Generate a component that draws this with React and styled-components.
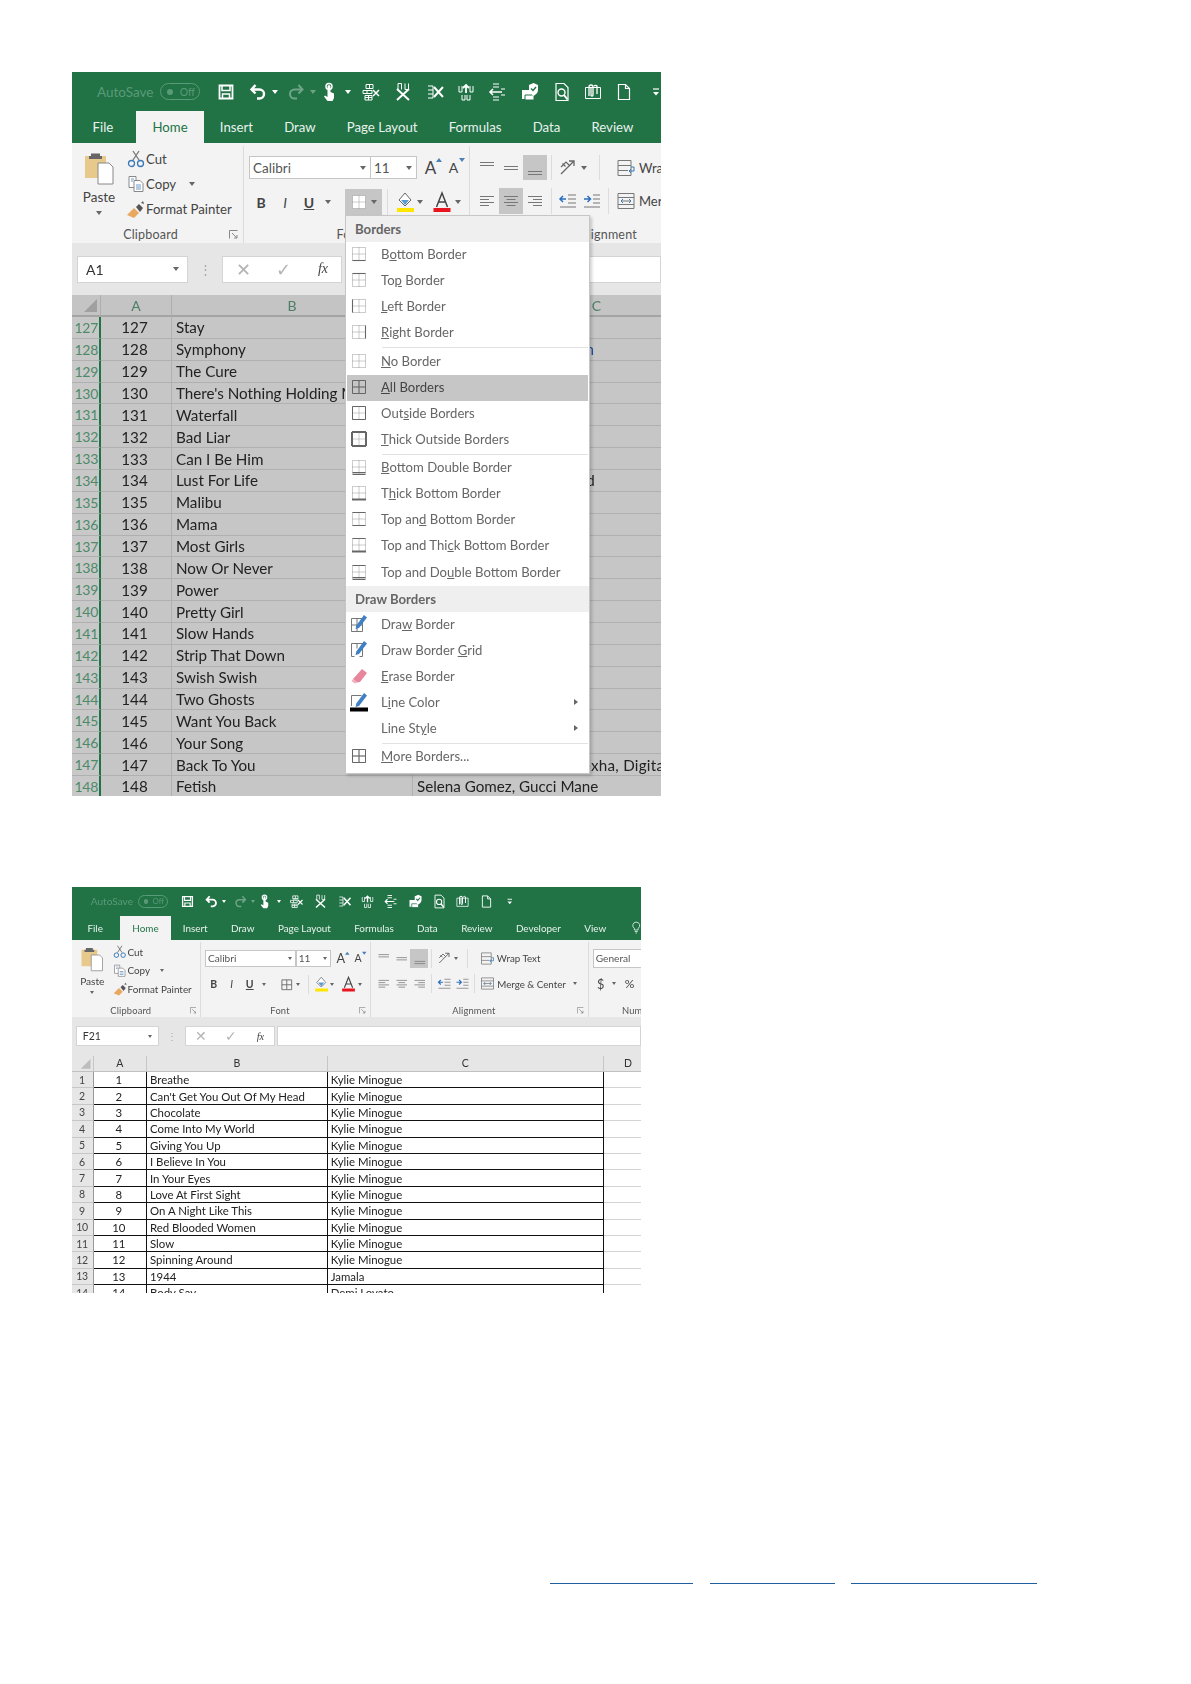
import React from 'react';
import styled, { createGlobalStyle } from 'styled-components';

const GlobalStyle = createGlobalStyle`
  html, body { margin: 0; padding: 0; background: #fff; }
  body { font-family: Lato, "Open Sans", sans-serif; }
`;

const Page = styled.div`
  width: 1191px;
  height: 1684px;
  box-sizing: border-box;
  padding: 72px 0 0 72px;
  overflow: hidden;
`;

const Window = styled.div`
  position: relative;
  width: ${(p) => p.$w}px;
  height: ${(p) => p.$h}px;
  zoom: ${(p) => p.$zoom};
  margin-top: ${(p) => p.$top}px;
  overflow: hidden;
  filter: blur(0.35px);
`;

const TitleBar = styled.div`
  display: flex;
  align-items: center;
  height: 39px;
  width: 800px;
  background: #217346;
  padding-left: 25px;
  box-sizing: border-box;
`;

const AutoSave = styled.span`
  width: 60px;
  font-size: 13.5px;
  color: #5a9a78;
`;

const Toggle = styled.span`
  display: flex;
  align-items: center;
  justify-content: space-between;
  box-sizing: border-box;
  width: 40px;
  height: 17px;
  margin-left: 3px;
  padding: 0 4px 0 6px;
  border: 1px solid #5a9a78;
  border-radius: 9px;
  font-size: 10.5px;
  color: #5a9a78;
  &::before {
    content: '';
    width: 6px;
    height: 6px;
    border-radius: 50%;
    background: #5a9a78;
  }
`;

const Slot = styled.span`
  display: flex;
  align-items: center;
  justify-content: center;
  flex: none;
  width: ${(p) => p.$w}px;
  margin-left: ${(p) => p.$ml || 0}px;
  opacity: ${(p) => (p.$faded ? 0.35 : 1)};
`;

const TabRow = styled.div`
  display: flex;
  align-items: stretch;
  height: 32px;
  width: 800px;
  background: #217346;
  padding-left: 5px;
`;

const Tab = styled.div`
  display: flex;
  align-items: center;
  padding: 0 ${(p) => (p.$active ? 16.6 : 15.6)}px;
  margin-right: ${(p) => p.$mr || 0}px;
  font-size: 13.2px;
  color: ${(p) => (p.$active ? '#217346' : '#e8f2ec')};
  background: ${(p) => (p.$active ? '#f3f3f3' : 'transparent')};
`;

const Ribbon = styled.div`
  display: flex;
  height: ${(p) => p.$h}px;
  width: 860px;
  background: #f3f3f3;
  color: #444;
`;

const Group = styled.div`
  display: flex;
  flex-direction: column;
  flex: none;
  box-sizing: border-box;
  width: ${(p) => p.$w}px;
  padding-left: ${(p) => p.$pl || 0}px;
  border-right: 1px solid #dcdcdc;
  margin: 3px 0 0;
`;

const GroupBody = styled.div`
  flex: 1;
  display: flex;
  flex-direction: ${(p) => (p.$column ? 'column' : 'row')};
  padding-top: ${(p) => p.$pt || 0}px;
  gap: ${(p) => p.$gap || 0}px;
`;

const GroupLabel = styled.div`
  display: grid;
  grid-template-columns: 1fr 14px;
  align-items: center;
  height: 17px;
  margin-left: ${(p) => (p.$pl ? -p.$pl : 0)}px;
  font-size: 12.5px;
  letter-spacing: 0.2px;
  color: #555;
  text-align: center;
`;

const PasteColumn = styled.div`
  display: flex;
  flex-direction: column;
  align-items: center;
  width: 54px;
  padding-top: 5px;
  font-size: 13.5px;
  line-height: 16px;
`;

const ClipStack = styled.div`
  display: flex;
  flex-direction: column;
`;

const ClipRow = styled.div`
  display: flex;
  align-items: center;
  height: 25px;
  font-size: 13.2px;
  white-space: nowrap;
`;

const ClipIcon = styled.span`
  display: flex;
  justify-content: center;
  width: 20px;
`;

const ToolRow = styled.div`
  display: flex;
  align-items: center;
  height: ${(p) => p.$h}px;
`;

const Box = styled.div`
  display: flex;
  align-items: center;
  justify-content: space-between;
  box-sizing: border-box;
  width: ${(p) => p.$w}px;
  height: 100%;
  padding: 0 4px 0 3px;
  margin-left: ${(p) => p.$ml || 0}px;
  background: #fff;
  border: 1px solid #c6c6c6;
  font-size: 13.5px;
  color: #555;
`;

const Tool = styled.span`
  display: flex;
  align-items: center;
  justify-content: center;
  flex: none;
  box-sizing: border-box;
  height: 100%;
  width: ${(p) => p.$w || 24}px;
  margin-left: ${(p) => p.$ml || 0}px;
  background: ${(p) => (p.$on ? '#c6c6c6' : 'transparent')};
  font-size: ${(p) => p.$fs || 14}px;
  font-weight: ${(p) => (p.$bold ? 700 : 400)};
  font-style: ${(p) => (p.$italic ? 'italic' : 'normal')};
  text-decoration: ${(p) => (p.$under ? 'underline' : 'none')};
  color: #444;
`;

const ToolSep = styled.span`
  flex: none;
  width: 1px;
  height: 100%;
  background: #dcdcdc;
  margin: 0 ${(p) => p.$mx || 4}px;
`;

const WrapLabel = styled.span`
  font-size: 13px;
  margin-left: 3px;
  white-space: nowrap;
`;

const Caret = styled.i`
  display: inline-block;
  flex: none;
  width: 0;
  height: 0;
  margin-left: ${(p) => p.$ml || 0}px;
  border-left: 3px solid transparent;
  border-right: 3px solid transparent;
  border-top: 4px solid ${(p) => p.$color || '#666'};
`;

const FormulaBar = styled.div`
  display: flex;
  align-items: center;
  height: 52px;
  background: #e6e6e6;
  padding-left: 5px;
`;

const NameBox = styled.div`
  display: flex;
  align-items: center;
  justify-content: space-between;
  box-sizing: border-box;
  flex: none;
  width: 111px;
  height: 27px;
  padding: 0 8px;
  background: #fff;
  border: 1px solid #d4d4d4;
  font-size: 14px;
  color: #333;
`;

const GripDots = styled.span`
  flex: none;
  width: 34px;
  text-align: center;
  font-size: 13px;
  color: #aaa;
`;

const FxBox = styled.div`
  display: grid;
  grid-template-columns: 40px 40px 40px;
  align-items: center;
  justify-items: center;
  box-sizing: border-box;
  flex: none;
  width: 120px;
  height: 27px;
  background: #fff;
  border: 1px solid #d4d4d4;
  font-size: 18px;
  color: #b4b4b4;
`;

const FxMark = styled.span`
  font-family: "Liberation Serif", serif;
  font-style: italic;
  font-size: 14px;
  color: #444;
`;

const FormulaInput = styled.div`
  flex: 1;
  height: 27px;
  margin-left: 3px;
  background: #fff;
  border: 1px solid #d4d4d4;
  box-sizing: border-box;
`;

const SheetRow = styled.div`
  display: grid;
  grid-template-columns: 29px 71px 241px 368px 66px;
  width: 775px;
  height: ${(p) => p.$h || 21.87}px;
  box-sizing: border-box;
  background: ${(p) => (p.$dim ? '#c6c6c6' : '#fff')};
  font-size: 15.2px;
  color: #222;
`;

const HeadCell = styled.div`
  display: flex;
  align-items: center;
  justify-content: center;
  box-sizing: border-box;
  background: ${(p) => (p.$dim ? '#c4c4c4' : '#e6e6e6')};
  border-right: 1px solid ${(p) => (p.$dim ? '#aeaeae' : '#c6c6c6')};
  border-bottom: 2px solid ${(p) => (p.$dim ? '#a4a4a4' : '#c0c0c0')};
  font-size: 14px;
  color: ${(p) => (p.$dim ? '#4d7f66' : '#333')};
`;

const Corner = styled(HeadCell)`
  align-items: flex-end;
  justify-content: flex-end;
  padding: 0 3px 3px 0;
  &::after {
    content: '';
    width: 13px;
    height: 13px;
    background: ${(p) => (p.$dim ? '#a0a0a0' : '#bdbdbd')};
    clip-path: polygon(100% 0, 100% 100%, 0 100%);
  }
`;

const RowHead = styled.div`
  display: flex;
  align-items: center;
  justify-content: ${(p) => (p.$dim ? 'flex-end' : 'center')};
  box-sizing: border-box;
  padding-right: 1px;
  background: ${(p) => (p.$dim ? '#c8c8c8' : '#e6e6e6')};
  border-right: ${(p) => (p.$dim ? '2px solid #217346' : '1px solid #9a9a9a')};
  border-bottom: 1px solid ${(p) => (p.$dim ? '#b0b0b0' : '#c6c6c6')};
  font-size: 14px;
  letter-spacing: -0.3px;
  color: ${(p) => (p.$dim ? '#4d8a6a' : '#444')};
`;

const Cell = styled.div`
  display: flex;
  align-items: center;
  justify-content: ${(p) => (p.$center ? 'center' : 'flex-start')};
  box-sizing: border-box;
  padding: 0 ${(p) => (p.$center ? 3 : 0)}px 0 ${(p) => (p.$center ? 0 : 4)}px;
  white-space: nowrap;
  min-width: 0;
  overflow: hidden;
  letter-spacing: ${(p) => p.$spacing || 0}px;
  color: ${(p) => p.$color || '#222'};
  border-right: 1px solid ${(p) => (p.$dim ? '#b0b0b0' : p.$free ? 'transparent' : '#111')};
  border-bottom: 1px solid ${(p) => (p.$dim ? '#b0b0b0' : p.$free ? '#d4d4d4' : '#111')};
`;

const Menu = styled.div`
  position: absolute;
  left: 273px;
  top: 143px;
  width: 245px;
  box-sizing: border-box;
  padding-bottom: 3px;
  background: #fff;
  border: 1px solid #c6c6c6;
  box-shadow: 2px 2px 3px rgba(0, 0, 0, 0.18);
`;

const MenuHead = styled.div`
  display: flex;
  align-items: center;
  height: 26px;
  padding-left: 9px;
  background: #efefef;
  font-size: 13.2px;
  font-weight: 700;
  color: #666;
`;

const MenuItem = styled.div`
  display: flex;
  align-items: center;
  box-sizing: border-box;
  height: 26.1px;
  padding-bottom: 2px;
  margin: 0 1px;
  background: ${(p) => (p.$on ? '#c6c6c6' : 'transparent')};
  font-size: 13.1px;
  color: ${(p) => (p.$on ? '#444' : '#666')};
  white-space: nowrap;
`;

const MenuIcon = styled.span`
  display: flex;
  justify-content: center;
  flex: none;
  width: 24px;
  margin-right: 10px;
`;

const Arrow = styled.i`
  width: 0;
  height: 0;
  margin: 0 10px 0 auto;
  border-top: 3.5px solid transparent;
  border-bottom: 3.5px solid transparent;
  border-left: 4px solid #666;
`;

const MenuSep = styled.div`
  margin: 0.6px 1px 0.6px 36px;
  height: 1px;
  background: #e2e2e2;
`;

const Footer = styled.div`
  display: flex;
  margin-top: 290px;
  padding-left: 478px;
`;

const FooterLink = styled.a`
  display: block;
  width: ${(p) => p.$w}px;
  margin-right: ${(p) => p.$mr || 0}px;
  border-bottom: 1px solid #1f5fa0;
`;

const Svg = ({ w = 20, h = 20, children }) => (
  <svg width={w} height={h} viewBox={`0 0 ${w} ${h}`} fill="none">
    {children}
  </svg>
);

const W = { stroke: '#fff', strokeWidth: 1.5 };

const qat = {
  save: (
    <Svg>
      <path d="M3.5 3.5h13v13h-13z" {...W} strokeWidth="1.8" />
      <path d="M6 3.5v5h8v-5M6.5 16.5v-4.5h7v4.5" {...W} />
    </Svg>
  ),
  undo: (
    <Svg>
      <path d="M7.5 3 3.5 7.5l4 4M3.5 7.5h8a4.5 4.5 0 0 1 0 9H9" {...W} strokeWidth="2.4" />
    </Svg>
  ),
  redo: (
    <Svg>
      <path d="M12.5 3l4 4.5-4 4M16.5 7.5h-8a4.5 4.5 0 0 0 0 9H11" {...W} strokeWidth="2" />
    </Svg>
  ),
  touch: (
    <Svg>
      <circle cx="10" cy="4.500" r="3" stroke="#fff" strokeWidth="1.500" />
      <path d="M8.500 4.500a1.500 1.500 0 0 1 3 0v5.500l3.500 1.500V16l-1.500 3h-5L5 14.500l1-1 2.500 1.500z" fill="#fff" />
    </Svg>
  ),
  delCells: (
    <Svg>
      <path d="M5 2.500h7v4H5zM5 6.500h7M8.500 2.500v4M2 8.500h9v3H2zM6 8.500v3M4 13.500h7v4.500H4zM4 15.500h7M7.500 13.500v4.500" stroke="#fff" strokeWidth="1" />
      <path d="m12 8 6 6m0-6-6 6" {...W} />
    </Svg>
  ),
  delCols: (
    <Svg>
      <path d="M5 1.500v6M8.500 1.500v6M12 1.500v6M15.500 1.500v6M5 1.500h3.500M12 7.500h3.500" stroke="#fff" strokeWidth="1" />
      <path d="m4 7 12 11M16 7 4 18" stroke="#fff" strokeWidth="2" />
    </Svg>
  ),
  delRows: (
    <Svg>
      <path d="M3 4h5v12H3M3 8h5M3 12h5" stroke="#fff" strokeWidth="1" />
      <path d="m9 5 9 10m0-10-9 10" stroke="#fff" strokeWidth="2" />
    </Svg>
  ),
  insCols: (
    <Svg>
      <path d="M3 4v6h3V4M14 4v6h3V4M6 13v5h3v-5M11 13v5h3v-5" stroke="#fff" strokeWidth="1" />
      <path d="M10 11V3M7 6l3-3 3 3" {...W} strokeWidth="1.8" />
    </Svg>
  ),
  insRows: (
    <Svg>
      <path d="M6 2h6M6 5h6M6 15h6M6 18h6M14 7h4M14 13h4" stroke="#fff" strokeWidth="1.2" />
      <path d="M15 10H3M6 7l-3 3 3 3" {...W} strokeWidth="1.6" />
    </Svg>
  ),
  secure: (
    <Svg>
      <path d="M2 8h9v9H2z" fill="#fff" />
      <path d="M5 18h9v-5H5z" fill="#fff" stroke="#217346" />
      <path d="M10 2.500 13.500 1 18 3v5c0 3-2 4.500-4.500 6C11 12.500 9 11 9 8V3z" fill="#fff" />
      <path d="m11 6.500 2 2 3-3.500" stroke="#217346" strokeWidth="1.4" />
    </Svg>
  ),
  preview: (
    <Svg>
      <path d="M4 1.500h8l4 4v13H4z" {...W} strokeWidth="1.2" />
      <circle cx="9.500" cy="10.500" r="3.500" stroke="#fff" strokeWidth="1.4" />
      <path d="m12 13 3.500 4.500" stroke="#fff" strokeWidth="2" />
    </Svg>
  ),
  clip: (
    <Svg>
      <path d="M2.500 5.500h15v11h-15z" stroke="#fff" strokeWidth="1" />
      <path d="M6 14V5a2 2 0 0 1 4 0v8a1 1 0 0 1-2 0V6M11 4h0a2 2 0 0 1 3 0v8" stroke="#fff" strokeWidth="1.300" />
    </Svg>
  ),
  doc: (
    <Svg>
      <path d="M4.500 2.500h7l4 4v11h-11zM11.500 2.500v4h4" {...W} strokeWidth="1.2" />
    </Svg>
  ),
  more: (
    <Svg w={10} h={20}>
      <path d="M2 7h6" stroke="#fff" strokeWidth="1.2" />
      <path d="m2 10 3 3.500L8 10z" fill="#fff" />
    </Svg>
  ),
};

const quick = [
  { k: 'save', w: 32, ml: 10 },
  { k: 'undo', w: 28, ml: 2 },
  { c: 1, w: 6 },
  { k: 'redo', w: 28, ml: 4, faded: 1 },
  { c: 1, w: 6, faded: 1 },
  { k: 'touch', w: 24, ml: 1 },
  { c: 1, w: 6, ml: 4 },
  { k: 'delCells', w: 32, ml: 4 },
  { k: 'delCols', w: 32 },
  { k: 'delRows', w: 32 },
  { k: 'insCols', w: 30 },
  { k: 'insRows', w: 32 },
  { k: 'secure', w: 34 },
  { k: 'preview', w: 30 },
  { k: 'clip', w: 32 },
  { k: 'doc', w: 30 },
  { k: 'more', w: 34 },
];

const borderLines = {
  bottom: [[2.5, 15.5, 15.5, 15.5, 1.1]],
  top: [[2.5, 2.5, 15.5, 2.5, 1.1]],
  left: [[2.5, 2.5, 2.5, 15.5, 1.1]],
  right: [[15.5, 2.5, 15.5, 15.5, 1.1]],
  none: [],
  outside: [[2.5, 2.5, 15.5, 2.5, 1], [2.5, 15.5, 15.5, 15.5, 1], [2.5, 2.5, 2.5, 15.5, 1], [15.5, 2.5, 15.5, 15.5, 1]],
  thick: [[2, 2, 16, 2, 2], [2, 16, 16, 16, 2], [2, 2, 2, 16, 2], [16, 2, 16, 16, 2]],
  double: [[2.5, 14.5, 15.5, 14.5, 1], [2.5, 16.5, 15.5, 16.5, 1]],
  thickBottom: [[2, 15.5, 16, 15.5, 2]],
  topBottom: [[2.5, 2.5, 15.5, 2.5, 1], [2.5, 15.5, 15.5, 15.5, 1]],
  topThick: [[2.5, 2.5, 15.5, 2.5, 1], [2, 15.5, 16, 15.5, 2]],
  topDouble: [[2.5, 2.5, 15.5, 2.5, 1], [2.5, 14.5, 15.5, 14.5, 1], [2.5, 16.5, 15.5, 16.5, 1]],
  all: [[2.5, 2.5, 15.5, 2.5, 1], [2.5, 15.5, 15.5, 15.5, 1], [2.5, 2.5, 2.5, 15.5, 1], [15.5, 2.5, 15.5, 15.5, 1], [9, 2.5, 9, 15.5, 1], [2.5, 9, 15.5, 9, 1]],
};

const BorderIcon = ({ kind, color = '#666', fill = 'none' }) => (
  <Svg w={18} h={18}>
    <path d="M2.500 2.500h13v13h-13zM9 2.500v13M2.500 9h13" fill={fill} stroke="#999" strokeWidth="1" strokeDasharray="1 1" />
    {borderLines[kind].map(([x1, y1, x2, y2, sw], i) => (
      <line key={i} x1={x1} y1={y1} x2={x2} y2={y2} stroke={color} strokeWidth={sw} />
    ))}
  </Svg>
);

const Lines = ({ rows, color = '#777' }) => (
  <Svg w={18} h={18}>
    {rows.map(([x1, x2, y], i) => (
      <line key={i} x1={x1} x2={x2} y1={y} y2={y} stroke={color} strokeWidth="1" />
    ))}
  </Svg>
);

const vTop = [[2, 16, 3.5], [2, 16, 6.5]];
const vMid = [[2, 16, 7.5], [2, 16, 10.5]];
const vBot = [[2, 16, 12.5], [2, 16, 15.5]];
const aLeft = [[2, 16, 4.5], [2, 11, 7.5], [2, 16, 10.5], [2, 11, 13.5]];
const aMid = [[2, 16, 4.5], [4.5, 13.5, 7.5], [2, 16, 10.5], [4.5, 13.5, 13.5]];
const aRight = [[2, 16, 4.5], [7, 16, 7.5], [2, 16, 10.5], [7, 16, 13.5]];

const PasteIcon = () => (
  <Svg w={32} h={34}>
    <path d="M2 5h21v22H2z" fill="#e8c98c" />
    <path d="M8 5V2.500h9V5h2v3H6V5z" fill="#666" />
    <path d="M15 12h11l4 4v17H15z" fill="#fff" stroke="#888" />
  </Svg>
);

const CutIcon = () => (
  <Svg w={18} h={18}>
    <path d="m6 10 6-9M12 10 6 1" stroke="#777" strokeWidth="1.3" />
    <circle cx="4.500" cy="13.500" r="3" stroke="#3a78b8" strokeWidth="1.300" />
    <circle cx="13.500" cy="13.500" r="3" stroke="#3a78b8" strokeWidth="1.300" />
  </Svg>
);

const CopyIcon = () => (
  <Svg w={18} h={18}>
    <path d="M2 1.500h7v11H2z" fill="#fff" stroke="#888" />
    <path d="M7 5.500h6l3 3v8H7z" fill="#fff" stroke="#888" />
    <path d="M9 10h5M9 12h5M9 14h5M4 4h3M4 6h2" stroke="#6a9ac8" strokeWidth="1" />
  </Svg>
);

const PainterIcon = () => (
  <Svg w={20} h={18}>
    <path d="m8 8 5 5-5 5-7-3z" fill="#e8a860" />
    <path d="m10 7 3-3 4 4-3 4z" fill="#555" />
    <path d="m15 3 2-2 1 3z" fill="#555" />
  </Svg>
);

const BucketIcon = () => (
  <Svg w={22} h={24}>
    <path d="m11 3 6 7-6 6-6-6z" fill="#fff" stroke="#666" />
    <path d="M7 10h8l-4 5z" fill="#5a9ad0" />
    <rect x="3" y="18" width="17" height="4" fill="#ffe600" />
  </Svg>
);

const ColorA = () => (
  <Svg w={20} h={24}>
    <path d="M4.500 17 10 3l5.500 14M6.500 12h7" stroke="#444" strokeWidth="1.500" />
    <rect x="1.500" y="18" width="17" height="4" fill="#e8141e" />
  </Svg>
);

const GrowA = ({ up, ml }) => (
  <>
    <Tool $w={17} $ml={ml} $fs={up ? 17 : 14}>A</Tool>
    <svg width="6" height="8" style={{ marginLeft: -3, marginRight: 3, alignSelf: 'flex-start', marginTop: 1 }}>
      <path d={up ? 'M0 5 3 1l3 4z' : 'M0 1h6L3 5z'} fill="#4a80b8" />
    </svg>
  </>
);

const OrientIcon = () => (
  <Svg w={20} h={20}>
    <path d="M3 16 16 3M11 3h5v5" stroke="#666" strokeWidth="1.300" />
    <path d="M3 9l5-5 4 4M4.500 5.500l3 3" stroke="#666" strokeWidth="1.200" />
  </Svg>
);

const IndentIcon = ({ flip }) => (
  <Svg w={20} h={18}>
    <path d={flip ? 'M11 3h7M11 7h7M11 11h7M2 15h16' : 'M10 3h8M10 7h8M10 11h8M2 15h16'} stroke="#777" strokeWidth="1" />
    <path d={flip ? 'M2 7h6M5.500 4 8.500 7l-3 3' : 'M8 7H2M5 4 2 7l3 3'} stroke="#2a6fc0" strokeWidth="1.500" />
  </Svg>
);

const WrapIcon = () => (
  <Svg w={20} h={20}>
    <path d="M2 2.500h13v15H2zM2 7.500h13M2 12.500h10" stroke="#777" strokeWidth="1" />
    <path d="M15 9h3v4h-5M15 11l-2 2 2 2" stroke="#3a78b8" strokeWidth="1" />
  </Svg>
);

const MergeIcon = () => (
  <Svg w={20} h={20}>
    <path d="M2 2.500h16v15H2zM2 6.500h16M2 13.500h16M5 10h10" stroke="#777" strokeWidth="1" />
    <path d="m5 10 2-2m-2 2 2 2m8-2-2-2m2 2-2 2" stroke="#3a78b8" strokeWidth="1" />
  </Svg>
);

const Launcher = () => (
  <svg width="9" height="9">
    <path d="M0.500 8.500V.5h8M3 3l5 5M5 8h3V5" stroke="#888" strokeWidth="1" fill="none" />
  </svg>
);

const PenIcon = ({ kind }) => (
  <Svg w={18} h={20}>
    {kind === 'draw' && <path d="M1.500 4.500h11v13h-11zM1.500 11h11M7 4.500v13" stroke="#777" strokeWidth="1" />}
    {kind === 'grid' && <path d="M1.500 3.500h11v13h-3M1.500 3.500v13h3M7 3.500v5" stroke="#777" strokeWidth="1" />}
    {kind === 'line' && <path d="M1.500 14V3.500h10" stroke="#777" strokeWidth="1" fill="none" />}
    {kind === 'line' && <rect x="0" y="15.500" width="18" height="4" fill="#000" />}
    <path d="m14 1 3 2.500L9 14l-3.500 1 .8-3.500z" fill="#3f7fc4" />
  </Svg>
);

const Eraser = () => (
  <Svg w={18} h={20}>
    <path d="M12 3l5 4-7 9-3 .500L3 13z" fill="#e8879c" />
    <path d="m3 13 4 3.500L5 17.500 1.500 15z" fill="#f0b0c0" />
  </Svg>
);

const borderItems = [
  ['bottom', 'B', 'o', 'ttom Border'],
  ['top', 'To', 'p', ' Border'],
  ['left', '', 'L', 'eft Border'],
  ['right', '', 'R', 'ight Border'],
  null,
  ['none', '', 'N', 'o Border'],
  ['all', '', 'A', 'll Borders', true],
  ['outside', 'Out', 's', 'ide Borders'],
  ['thick', '', 'T', 'hick Outside Borders'],
  null,
  ['double', '', 'B', 'ottom Double Border'],
  ['thickBottom', 'T', 'h', 'ick Bottom Border'],
  ['topBottom', 'Top an', 'd', ' Bottom Border'],
  ['topThick', 'Top and Thi', 'c', 'k Bottom Border'],
  ['topDouble', 'Top and Do', 'u', 'ble Bottom Border'],
];

const BordersMenu = () => (
  <Menu>
    <MenuHead>Borders</MenuHead>
    {borderItems.map((it, i) =>
      it ? (
        <MenuItem key={i} $on={it[4]}>
          <MenuIcon><BorderIcon kind={it[0]} /></MenuIcon>
          <span>{it[1]}<u>{it[2]}</u>{it[3]}</span>
        </MenuItem>
      ) : (
        <MenuSep key={i} />
      ),
    )}
    <MenuHead>Draw Borders</MenuHead>
    <MenuItem><MenuIcon><PenIcon kind="draw" /></MenuIcon><span>Dra<u>w</u> Border</span></MenuItem>
    <MenuItem><MenuIcon><PenIcon kind="grid" /></MenuIcon><span>Draw Border <u>G</u>rid</span></MenuItem>
    <MenuItem><MenuIcon><Eraser /></MenuIcon><span><u>E</u>rase Border</span></MenuItem>
    <MenuItem><MenuIcon><PenIcon kind="line" /></MenuIcon><span>L<u>i</u>ne Color</span><Arrow /></MenuItem>
    <MenuItem><MenuIcon /><span>Line St<u>y</u>le</span><Arrow /></MenuItem>
    <MenuSep />
    <MenuItem><MenuIcon><BorderIcon kind="all" /></MenuIcon><span><u>M</u>ore Borders...</span></MenuItem>
  </Menu>
);

const tabs = ['Insert', 'Draw', 'Page Layout', 'Formulas', 'Data', 'Review', 'Developer', 'View'];

const RibbonArea = ({ menuOpen, height }) => (
  <Ribbon $h={height}>
    <Group $w={172}>
      <GroupBody>
        <PasteColumn>
          <PasteIcon />
          <span style={{ marginTop: 4 }}>Paste</span>
          <Caret style={{ marginTop: 6 }} />
        </PasteColumn>
        <ClipStack>
          <ClipRow><ClipIcon><CutIcon /></ClipIcon>Cut</ClipRow>
          <ClipRow><ClipIcon><CopyIcon /></ClipIcon>Copy<Caret $ml={13} /></ClipRow>
          <ClipRow><ClipIcon><PainterIcon /></ClipIcon>Format Painter</ClipRow>
        </ClipStack>
      </GroupBody>
      <GroupLabel><span>Clipboard</span><Launcher /></GroupLabel>
    </Group>

    <Group $w={226} $pl={5}>
      <GroupBody $column $pt={10} $gap={10}>
        <ToolRow $h={23}>
          <Box $w={122}>Calibri<Caret /></Box>
          <Box $w={47} $ml={-1}>11<Caret /></Box>
          <GrowA up ml={5} />
          <GrowA />
        </ToolRow>
        <ToolRow $h={26}>
          <Tool $bold>B</Tool>
          <Tool $italic>I</Tool>
          <Tool $under $bold>U</Tool>
          <Caret $ml={4} />
          <Tool $w={37} $ml={14} $on={menuOpen}>
            <BorderIcon kind={menuOpen ? 'none' : 'all'} fill={menuOpen ? '#fff' : 'none'} />
            <Caret $ml={3} />
          </Tool>
          <ToolSep $mx={5} />
          <Tool $w={24}><BucketIcon /></Tool>
          <Caret $ml={0} />
          <Tool $w={24} $ml={7}><ColorA /></Tool>
          <Caret $ml={1} />
        </ToolRow>
      </GroupBody>
      <GroupLabel $pl={5}><span>Font</span><Launcher /></GroupLabel>
    </Group>

    <Group $w={291} $pl={5}>
      <GroupBody $column $pt={9} $gap={8}>
        <ToolRow $h={25}>
          <Tool><Lines rows={vTop} /></Tool>
          <Tool><Lines rows={vMid} /></Tool>
          <Tool $on><Lines rows={vBot} /></Tool>
          <ToolSep />
          <Tool><OrientIcon /></Tool>
          <Caret $ml={1} />
          <ToolSep $mx={12} />
          <Tool $w={20} $ml={4}><WrapIcon /></Tool>
          <WrapLabel>Wrap Text</WrapLabel>
        </ToolRow>
        <ToolRow $h={26}>
          <Tool><Lines rows={aLeft} /></Tool>
          <Tool $on={menuOpen}><Lines rows={aMid} /></Tool>
          <Tool><Lines rows={aRight} /></Tool>
          <ToolSep />
          <Tool><IndentIcon /></Tool>
          <Tool><IndentIcon flip /></Tool>
          <ToolSep />
          <Tool $w={20} $ml={3}><MergeIcon /></Tool>
          <WrapLabel>Merge &amp; Center</WrapLabel>
          <Caret $ml={9} />
        </ToolRow>
      </GroupBody>
      <GroupLabel $pl={5}><span>Alignment</span><Launcher /></GroupLabel>
    </Group>

    <Group $w={150} $pl={5}>
      <GroupBody $column $pt={9} $gap={8}>
        <ToolRow $h={25}>
          <Box $w={100}>General</Box>
        </ToolRow>
        <ToolRow $h={26}>
          <Tool $w={22} $fs={17}>$</Tool>
          <Caret $ml={4} />
          <Tool $w={24} $ml={6} $fs={16}>%</Tool>
        </ToolRow>
      </GroupBody>
      <GroupLabel $pl={5}><span>Number</span><i /></GroupLabel>
    </Group>
  </Ribbon>
);

const Excel = ({ w, h, zoom, top, menuOpen, ribbonHeight, cellName, rows }) => (
  <Window $w={w} $h={h} $zoom={zoom} $top={top}>
    <TitleBar>
      <AutoSave>AutoSave</AutoSave>
      <Toggle>Off</Toggle>
      {quick.map((q, i) => (
        <Slot key={i} $w={q.w} $ml={q.ml} $faded={q.faded}>
          {q.k ? qat[q.k] : <Caret $color="#fff" />}
        </Slot>
      ))}
    </TitleBar>
    <TabRow>
      <Tab $mr={7}>File</Tab>
      <Tab $active>Home</Tab>
      {tabs.map((t) => <Tab key={t}>{t}</Tab>)}
      <Slot $w={20} $ml={14}>
        <svg width="14" height="18" fill="none" stroke="#fff">
          <path d="M7 1.500a4.500 4.500 0 0 1 2.500 8.300V12h-5V9.800A4.500 4.500 0 0 1 7 1.500zM5 14h4M6 16h2" />
        </svg>
      </Slot>
    </TabRow>
    <RibbonArea menuOpen={menuOpen} height={ribbonHeight} />
    <FormulaBar>
      <NameBox>{cellName}<Caret /></NameBox>
      <GripDots>⋮</GripDots>
      <FxBox>
        <span>✕</span>
        <span>✓</span>
        <FxMark>fx</FxMark>
      </FxBox>
      <FormulaInput />
    </FormulaBar>
    <SheetRow $h={22} $dim={menuOpen}>
      <Corner $dim={menuOpen} />
      {['A', 'B', 'C', 'D'].map((c) => <HeadCell key={c} $dim={menuOpen}>{c}</HeadCell>)}
    </SheetRow>
    {rows.map((r) => (
      <SheetRow key={r.n} $dim={menuOpen}>
        <RowHead $dim={menuOpen}>{r.n}</RowHead>
        <Cell $center $dim={menuOpen}>{r.n}</Cell>
        <Cell $dim={menuOpen}>{r.title}</Cell>
        <Cell $dim={menuOpen} $color={r.color} $spacing={r.spacing}>{r.artist}</Cell>
        <Cell $free $dim={menuOpen} />
      </SheetRow>
    ))}
    {menuOpen && <BordersMenu />}
  </Window>
);

const firstTitles = [
  'Stay', 'Symphony', 'The Cure', "There's Nothing Holding Me Back", 'Waterfall', 'Bad Liar',
  'Can I Be Him', 'Lust For Life', 'Malibu', 'Mama', 'Most Girls', 'Now Or Never', 'Power',
  'Pretty Girl', 'Slow Hands', 'Strip That Down', 'Swish Swish', 'Two Ghosts', 'Want You Back',
  'Your Song', 'Back To You', 'Fetish',
];

const firstArtists = {
  128: 'Clean Bandit, Zara Larsson',
  134: 'Lana Del Rey, The Weeknd',
  147: 'Louis Tomlinson, Bebe Rexha, Digital Farm Animals',
  148: 'Selena Gomez, Gucci Mane',
};

const firstRows = firstTitles.map((title, i) => ({
  n: 127 + i,
  title,
  artist: firstArtists[127 + i] || '',
  color: 127 + i === 128 ? '#1a4fa0' : undefined,
  spacing: 127 + i === 147 ? 0.25 : 0,
}));

const secondTitles = [
  'Breathe', "Can't Get You Out Of My Head", 'Chocolate', 'Come Into My World', 'Giving You Up',
  'I Believe In You', 'In Your Eyes', 'Love At First Sight', 'On A Night Like This',
  'Red Blooded Women', 'Slow', 'Spinning Around',
];

const secondRows = [
  ...secondTitles.map((title, i) => ({ n: i + 1, title, artist: 'Kylie Minogue' })),
  { n: 13, title: '1944', artist: 'Jamala' },
  { n: 14, title: 'Body Say', artist: 'Demi Lovato' },
];

export default function App() {
  return (
    <Page>
      <GlobalStyle />
      <Excel w={589} h={724} zoom={1} top={0} menuOpen ribbonHeight={100} cellName="A1" rows={firstRows} />
      <Excel w={759} h={541} zoom={0.75} top={121} ribbonHeight={102} cellName="F21" rows={secondRows} />
      <Footer>
        <FooterLink $w={143} $mr={17} />
        <FooterLink $w={125} $mr={16} />
        <FooterLink $w={186} />
      </Footer>
    </Page>
  );
}
